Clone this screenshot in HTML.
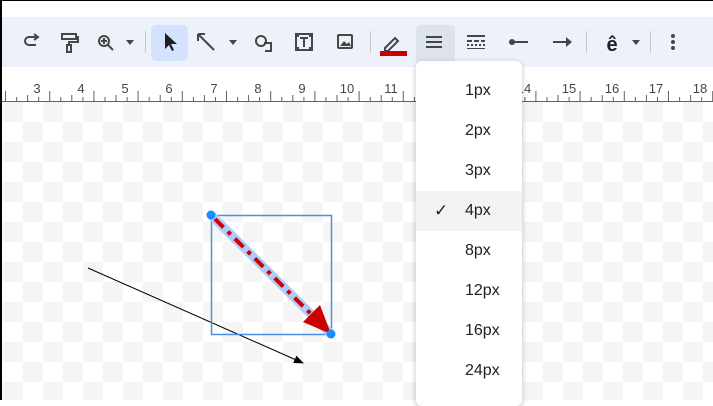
<!DOCTYPE html>
<html><head><meta charset="utf-8"><style>
*{margin:0;padding:0;box-sizing:border-box}
body{width:713px;height:400px;overflow:hidden;position:relative;background:#fff;font-family:"Liberation Sans",Roboto,sans-serif}
.tb{position:absolute;left:0;top:17px;width:713px;height:50px;background:#edf2fa}
.canvas{position:absolute;left:3px;top:102px;width:710px;height:298px;
background-color:#fff;
background-image:linear-gradient(45deg,#f5f5f5 25%,transparent 25%,transparent 75%,#f5f5f5 75%),linear-gradient(45deg,#f5f5f5 25%,transparent 25%,transparent 75%,#f5f5f5 75%);
background-size:40px 40px;background-position:20px 0,0 20px}
.menu{position:absolute;left:416px;top:61px;width:106px;height:345px;background:#fff;border-radius:6px;box-shadow:0 2px 6px rgba(0,0,0,.25)}
.mi{position:absolute;left:0;width:106px;height:40px;line-height:40px;padding-left:49px;font-size:16px;color:#202124}
.sel{background:#f1f3f4}
</style></head><body>
<div style="position:absolute;left:0;top:0;width:713px;height:1px;background:#000"></div>
<div style="position:absolute;left:0;top:0;width:2px;height:400px;background:#000;z-index:5"></div>
<div class="tb"></div>
<svg style="position:absolute;left:0;top:0" width="713" height="102">
<rect x="151" y="25" width="37" height="36" rx="5" fill="#d3e3fd"/>
<rect x="416" y="25" width="39" height="40" rx="5" fill="#dde3ea"/>
<g fill="none" stroke="#444746" stroke-width="2">
<path d="M38 37h-9a4 4 0 0 0 0 8h7"/><path d="M34 34l4 3-4 3"/>
<rect x="62" y="34" width="14" height="5"/><path d="M76 37h2v5h-9v3"/><rect x="67" y="45" width="4" height="7"/>
<circle cx="104" cy="41" r="5"/><path d="M108 45l5 5M101 41h6M104 38v6"/>
<path d="M199 35l15 15"/><path d="M198 34v7M198 34h7"/>
<circle cx="261" cy="41" r="5"/><path d="M264 43h7v8h-6"/>
<rect x="296" y="34" width="16" height="16"/><path d="M300 38h8M304 38v9"/>
<rect x="338" y="35" width="14" height="13" rx="1"/>
<path d="M385 48l10-10 3 3-10 10h-3z"/>
<path d="M426 37h16M426 42h16M426 47h16"/>
<path d="M510 42h18"/>
<path d="M553 42h14"/>
</g>
<path d="M165 33l0 16 4-4 3 6 2-1-3-6h6z" fill="#1f1f1f"/>
<g fill="#444746">
<rect x="295" y="33" width="4" height="4"/><rect x="309" y="33" width="4" height="4"/><rect x="295" y="47" width="4" height="4"/><rect x="309" y="47" width="4" height="4"/>
<path d="M340 46l4-5 3 3 2-2 2 4z"/>
<path d="M126 40h8l-4 5zM229 40h8l-4 5zM632 40h8l-4 5z"/>
<circle cx="512" cy="42" r="3"/><path d="M566 37l6 5-6 5z"/>
<rect x="467" y="35" width="18" height="2"/><rect x="467" y="40" width="5" height="2"/><rect x="474" y="40" width="5" height="2"/><rect x="481" y="40" width="4" height="2"/>
<rect x="467" y="44" width="2" height="2"/><rect x="471" y="44" width="2" height="2"/><rect x="475" y="44" width="2" height="2"/><rect x="479" y="44" width="2" height="2"/><rect x="483" y="44" width="2" height="2"/>
<rect x="467" y="48" width="18" height="1"/>
<circle cx="673" cy="36" r="2"/><circle cx="673" cy="42" r="2"/><circle cx="673" cy="48" r="2"/>
</g>
<rect x="380" y="51" width="27" height="5" fill="#c00"/>
<text x="612" y="51" font-size="20" font-weight="bold" text-anchor="middle" fill="#202124" font-family="Liberation Sans,sans-serif">ê</text>
<g fill="#c4c7c5"><rect x="145" y="31" width="1" height="22"/><rect x="370" y="31" width="1" height="22"/><rect x="586" y="31" width="1" height="22"/><rect x="650" y="31" width="1" height="22"/></g>
<g id="r" stroke="#5f6368" stroke-width="1"></g>
<line x1="0" y1="101.5" x2="713" y2="101.5" stroke="#5f6368"/>
<g font-size="13" fill="#444746" text-anchor="middle" font-family="Liberation Sans,sans-serif">
<text x="37" y="93">3</text><text x="81" y="93">4</text><text x="125" y="93">5</text><text x="169" y="93">6</text><text x="214" y="93">7</text><text x="258" y="93">8</text><text x="302" y="93">9</text><text x="347" y="93">10</text><text x="391" y="93">11</text><text x="569" y="93">15</text><text x="612" y="93">16</text><text x="656" y="93">17</text><text x="700" y="93">18</text><text x="524" y="93">14</text>
</g>
</svg>
<div class="canvas"></div>
<svg style="position:absolute;left:0;top:0" width="713" height="400">
<defs><marker id="a" markerWidth="10" markerHeight="8" refX="9" refY="4" orient="auto" markerUnits="userSpaceOnUse"><path d="M0 0L10 4L0 8z" fill="#000"/></marker></defs>
<line x1="88" y1="268" x2="303" y2="363" stroke="#000" stroke-width="1" marker-end="url(#a)"/>
<rect x="211.5" y="215.5" width="120" height="119" fill="none" stroke="#4a90e2" stroke-width="1.5"/>
<line x1="211" y1="215" x2="331" y2="334" stroke="#aecbfa" stroke-width="9"/>
<line x1="215" y1="219" x2="312" y2="315" stroke="#c00" stroke-width="4" stroke-dasharray="12 6 4 6"/>
<path d="M331 334L303 322L320 305z" fill="#c00"/>
<circle cx="211" cy="215" r="4.5" fill="#1a8cff"/><circle cx="331" cy="334" r="4.5" fill="#1a8cff"/>
</svg>
<div class="menu">
<div class="mi" style="top:10px">1px</div>
<div class="mi" style="top:50px">2px</div>
<div class="mi" style="top:90px">3px</div>
<div class="mi sel" style="top:130px"><span style="position:absolute;left:18px;font-size:17px">✓</span>4px</div>
<div class="mi" style="top:170px">8px</div>
<div class="mi" style="top:210px">12px</div>
<div class="mi" style="top:250px">16px</div>
<div class="mi" style="top:290px">24px</div>
</div>
<script>
var g=document.getElementById('r'),s='';
for(var i=0;i<70;i++){var x=5.5+i*11.05;var h=(i%4==0)?10:(i%2==0?6:4);
if(x>416&&x<522)continue;
s+='<line x1="'+x.toFixed(1)+'" y1="'+(101-h)+'" x2="'+x.toFixed(1)+'" y2="101"/>';}
g.innerHTML=s;
</script>
</body></html>
